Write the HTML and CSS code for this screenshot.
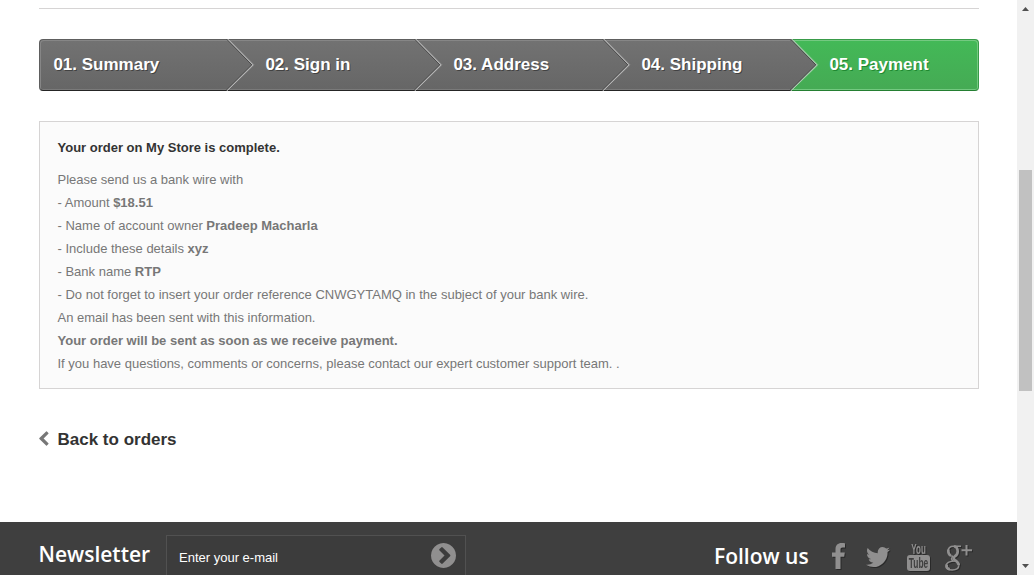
FILE: index.html
```html
<!DOCTYPE html>
<html lang="en">
<head>
<meta charset="utf-8">
<title>Order confirmation - My Store</title>
<link rel="stylesheet" href="styles.css">
</head>
<body>
<div class="window">
  <div class="page">
    <main class="container">
      <hr class="rule">
      <ol class="steps">
        <li class="step first">01. Summary</li>
        <li class="step"><svg class="chev" viewBox="0 0 30 52"><path class="soft" d="M3.3 1L28.2 26 1.8 51"/><path class="edge" d="M.5 0L25.8 25.8-.5 52"/><path class="light" d="M1.7 0L27 25.8.7 52"/></svg>02. Sign in</li>
        <li class="step"><svg class="chev" viewBox="0 0 30 52"><path class="soft" d="M3.3 1L28.2 26 1.8 51"/><path class="edge" d="M.5 0L25.8 25.8-.5 52"/><path class="light" d="M1.7 0L27 25.8.7 52"/></svg>03. Address</li>
        <li class="step"><svg class="chev" viewBox="0 0 30 52"><path class="soft" d="M3.3 1L28.2 26 1.8 51"/><path class="edge" d="M.5 0L25.8 25.8-.5 52"/><path class="light" d="M1.7 0L27 25.8.7 52"/></svg>04. Shipping</li>
        <li class="step current"><svg class="chev" viewBox="0 0 30 52"><defs><linearGradient id="grey" x2="0" y2="1"><stop stop-color="#727272"/><stop offset="1" stop-color="#666"/></linearGradient></defs><path fill="url(#grey)" d="M-1 0H1L26 26 0 52H-1Z"/><path class="soft" d="M3.3 1L28.2 26 1.8 51"/><path class="edge" d="M.5 0L25.8 25.8-.5 52"/><path class="light" d="M1.7 0L27 25.8.7 52"/></svg>05. Payment</li>
      </ol>
      <section class="box">
        <p class="title"><strong>Your order on My Store is complete.</strong></p>
        <p>Please send us a bank wire with<br>
        - Amount <strong>$18.51</strong><br>
        - Name of account owner <strong>Pradeep Macharla</strong><br>
        - Include these details <strong>xyz</strong><br>
        - Bank name <strong>RTP</strong><br>
        - Do not forget to insert your order reference CNWGYTAMQ in the subject of your bank wire.<br>
        An email has been sent with this information.<br>
        <strong>Your order will be sent as soon as we receive payment.</strong><br>
        If you have questions, comments or concerns, please contact our expert customer support team. .</p>
      </section>
      <a class="back"><svg class="back-icon" viewBox="410 0 1060 1664"><path d="M1427 301l-531 531 531 531q19 19 19 45t-19 45l-166 166q-19 19-45 19t-45-19l-742-742q-19-19-19-45t19-45l742-742q19-19 45-19t45 19l166 166q19 19 19 45t-19 45z"/></svg>Back to orders</a>
    </main>
    <footer class="footer">
      <h4 class="newsletter">Newsletter</h4>
      <div class="field"><span>Enter your e-mail</span>
        <svg class="go" viewBox="128 128 1536 1536"><path d="M845 1395l454-454q19-19 19-45t-19-45l-454-454q-19-19-45-19t-45 19l-102 102q-19 19-19 45t19 45l307 307-307 307q-19 19-19 45t19 45l102 102q19 19 45 19t45-19zm819-499q0 209-103 385.5t-279.5 279.5-385.5 103-385.5-103-279.5-279.5-103-385.5 103-385.5 279.5-279.5 385.5-103 385.5 103 279.5 279.5 103 385.5z"/></svg>
      </div>
      <h4 class="follow">Follow us</h4>
      <div class="social">
        <svg class="fb" viewBox="0 0 13 26"><path d="M13 .3V4.600h-2.300C9 4.600 8.500 5.300 8.500 6.700V9.500H12.800L12.200 13.800H8.500V26H3.500V13.800H0V9.500H3.500V6.200C3.500 2.200 5.900 0 9.500 0 11 0 12.300.1 13 .3Z"/></svg>
        <svg class="tw" viewBox="108 256 1576 1280" preserveAspectRatio="none"><path d="M1684 408q-67 98-162 167 1 14 1 42 0 130-38 259.5t-115.5 248.5-184.5 210.5-258 146-323 54.5q-271 0-496-145 35 4 78 4 225 0 401-138-105-2-188-64.5t-114-159.5q33 5 61 5 43 0 85-11-112-23-185.500-111.500t-73.500-205.500v-4q68 38 146 41-66-44-105-115t-39-154q0-88 44-163 121 149 294.500 238.500t371.500 99.500q-8-38-8-74 0-134 94.500-228.500t228.500-94.500q140 0 236 102 109-21 205-78-37 115-142 178 93-10 186-50z"/></svg>
        <svg class="yt" viewBox="0 0 24 29"><text class="you" x="4.300" y="10.800" textLength="14.500" lengthAdjust="spacingAndGlyphs">You</text><rect x="0" y="12" width="23" height="16" rx="3"/><text class="tube" x="1.800" y="25" textLength="19.500" lengthAdjust="spacingAndGlyphs">Tube</text></svg>
        <svg class="gp" viewBox="0 0 28 28"><path class="thin" d="M16 2.200H8.500M8.500 2.200C4.800 2.200 3.200 4.300 3.200 7c0 3 2 5.200 4.800 5.200M7.500 13C6 14.500 6.300 16 8.300 16.700M10.500 16.900C5 17 1.200 18.500 1.200 21.700c0 2.800 2.600 4.300 6 4.300 4 0 6.600-1.900 6.600-4.700"/><path class="thick" d="M9 2.300c2.700.7 3.700 2.800 3.700 5.200 0 2.300-1 3.600-2.600 4.700C8 13.700 8.300 15 10 16.200c2.300 1.500 3.800 2.900 3.800 5.100M3.300 5.500c-.2 3 .8 5.300 2.600 6.200M1.700 20.500c-.5 2.500.8 4.300 3 4.900"/><path class="plus" d="M21.500 1v10.500M16.500 6.200h10.500"/></svg>
      </div>
    </footer>
  </div>
  <div class="scrollbar"><i class="up"></i><i class="thumb"></i><i class="down"></i></div>
</div>
</body>
</html>
```
FILE: styles.css
```css
* { box-sizing: border-box; }
body { margin: 0; background: #fff; color: #777; font: 13px/23px "Liberation Sans", Arial, sans-serif; }
p, h4, ol { margin: 0; padding: 0; }
.window { display: flex; height: 575px; overflow: hidden; }
.page { width: 1017px; display: flex; flex-direction: column; }
.container { height: 522px; flex: none; padding: 8px 38px 0 39px; }
.rule { height: 1px; border: 0; margin: 0 0 30px; background: #d6d4d4; }

.steps { display: flex; list-style: none; height: 52px; }
.step {
  position: relative; width: 188px; padding-left: 38.4px;
  font-weight: bold; font-size: 17px; line-height: 50px; color: #fff;
  text-shadow: 1px 1px rgba(0,0,0,.4);
  background: linear-gradient(#727272, #666);
  border-top: 1px solid #5e5e5e; border-bottom: 1px solid #252525;
  box-shadow: inset 0 1px #868686, inset 0 -1px #7a7a7a;
}
.first { padding-left: 13.4px; border-left: 1px solid #5e5e5e; border-radius: 4px 0 0 4px; box-shadow: inset 1px 1px #868686, inset 0 -1px #7a7a7a; }
.current {
  background: linear-gradient(#43b957, #45aa54);
  text-shadow: 1px 1px #208931;
  border-color: #399b49 #2e9b3f #247f32; border-right: 1px solid #399b49;
  border-radius: 0 4px 4px 0;
  box-shadow: inset -1px 1px #74c981, inset 0 -1px #74c981;
}
.chev { position: absolute; left: -1px; top: -1px; width: 30px; height: 52px; overflow: hidden; }
.chev path:not([fill]) { fill: none; stroke-width: 1; }
.chev .soft { stroke: #858585; }
.chev .edge { stroke: #494949; }
.chev .light { stroke: #c8c8c8; stroke-width: 1.4; }
.current .chev .soft { stroke: #74c981; }

.box { margin-top: 30px; height: 268px; padding: 13px 18px 0 17.5px; border: 1px solid #d6d4d4; background: #fbfbfb; }
.title { color: #333; line-height: 25px; margin-bottom: 8px; }
.back { display: flex; align-items: flex-start; margin-top: 39px; font-weight: bold; font-size: 17px; line-height: 24px; color: #333; }
.back-icon { width: 10px; height: 15px; margin: 3px 8.5px 0 0; fill: #777; }

.footer { height: 53px; flex: none; display: flex; background: #3f3f3f; color: #fff; overflow: hidden; }
.footer h4 { font: 600 21px/30px "Open Sans", sans-serif; white-space: nowrap; }
.newsletter { margin: 17px 0 0 38.5px; width: 127.5px; }
.field { width: 300px; height: 46px; flex: none; margin-top: 13px; padding: 0 9px 0 12px; border: 1px solid #515151; background: #3c3c3c; display: flex; justify-content: space-between; font-size: 13px; line-height: 43px; }
.go { width: 25px; height: 25px; margin-top: 7px; fill: #908f8f; }
.follow { margin: 19px 0 0 248px; width: 118px; }
.social { display: flex; align-items: flex-start; fill: #908f8f; filter: drop-shadow(1px 1px rgba(0,0,0,.35)); }
.social svg { flex: none; overflow: visible; }
.fb { width: 13px; height: 26px; margin-top: 21px; }
.tw { width: 24px; height: 20px; margin: 25px 0 0 21px; }
.yt { width: 24px; height: 29px; margin: 21px 0 0 17px; }
.you, .tube { font: bold 14px "Liberation Sans", sans-serif; }
.you { font-size: 14px; }
.tube { fill: #3f3f3f; }
.gp { width: 28px; height: 28px; margin: 22px 0 0 14px; }
.gp path { fill: none; stroke: #908f8f; }
.gp .thin { stroke-width: 1.5; }
.gp .thick { stroke-width: 2.7; }
.gp .plus { stroke-width: 2; }

.scrollbar { width: 17px; height: 575px; background: #f1f1f1; display: flex; flex-direction: column; align-items: center; }
.up, .down { width: 7px; height: 4px; background: #505050; }
.up { margin-top: 7px; clip-path: polygon(50% 0, 100% 100%, 0 100%); }
.thumb { width: 13px; height: 221px; margin-top: 159px; background: #c1c1c1; }
.down { margin-top: 173px; clip-path: polygon(0 0, 100% 0, 50% 100%); }
```
